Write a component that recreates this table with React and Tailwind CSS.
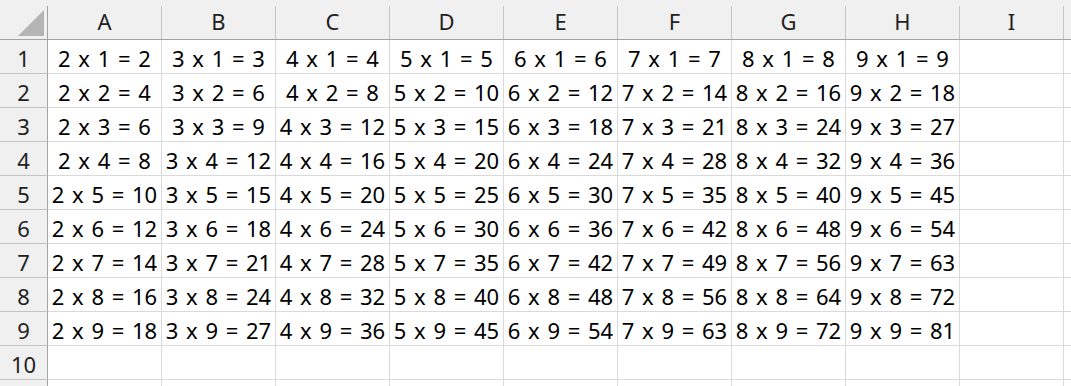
import React from "react";

const COLS = ["A", "B", "C", "D", "E", "F", "G", "H"];
const ROWS = [1, 2, 3, 4, 5, 6, 7, 8, 9, 10, 11];

function HeaderCell({ label, width }) {
  return (
    <div className={`flex h-full ${width}`}>
      <div className="flex flex-1 items-center justify-center pt-[3px] text-[#222]">{label}</div>
      <div className="mt-[6px] w-px self-stretch bg-[#c6c6c6]" />
    </div>
  );
}

export default function App() {
  return (
    <div
      className="h-[386px] w-[1071px] overflow-hidden bg-white text-[22px] leading-none text-black [word-spacing:2px]"
      style={{ fontFamily: '"Noto Sans", "Open Sans", sans-serif' }}
    >
      {/* column header row */}
      <div className="flex h-[40px] border-b border-[#a3a3a3] bg-[#f0f0f0]">
        <div className="flex h-full w-[48px] shrink-0">
          <div className="flex flex-1 items-start">
            <svg width="47" height="39" viewBox="0 0 47 39">
              <polygon points="44,10 44,36 18,36" fill="#b4b4b4" />
            </svg>
          </div>
          <div className="mt-[6px] w-px self-stretch bg-[#a3a3a3]" />
        </div>
        {COLS.map((c) => (
          <HeaderCell key={c} label={c} width="w-[114px] shrink-0" />
        ))}
        <HeaderCell label="I" width="w-[104px] shrink-0" />
        <div className="flex-1" />
      </div>

      {ROWS.map((r) => (
        <div key={r} className="flex h-[34px]">
          <div className="flex w-[48px] shrink-0 items-center justify-center border-r border-b border-r-[#a3a3a3] border-b-[#c4c4c4] bg-[#f0f0f0] pt-[2px] text-[#222]">
            {r <= 10 ? r : ""}
          </div>
          {COLS.map((c, i) => (
            <div
              key={c}
              className="flex w-[114px] shrink-0 items-center justify-center border-r border-b border-[#dadada] pt-[2px] whitespace-pre"
            >
              {r <= 9 ? `${i + 2} x ${r} = ${(i + 2) * r}` : ""}
            </div>
          ))}
          <div className="w-[104px] shrink-0 border-r border-b border-[#dadada]" />
          <div className="flex-1 border-b border-[#dadada]" />
        </div>
      ))}
    </div>
  );
}
